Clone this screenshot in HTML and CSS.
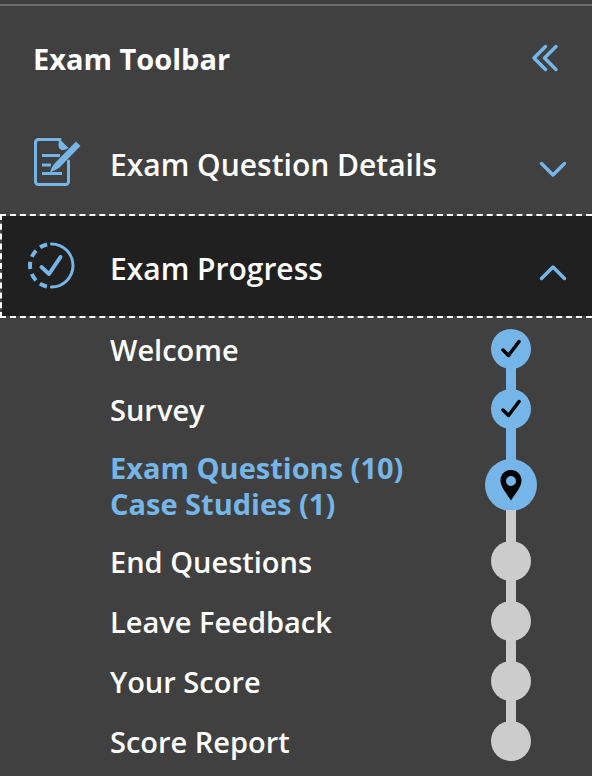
FILE: index.html
```html
<!DOCTYPE html>
<html lang="en">
<head>
<meta charset="utf-8">
<meta name="viewport" content="width=device-width, initial-scale=1">
<title>Exam Toolbar</title>
<link rel="stylesheet" href="styles.css">
</head>
<body>
<aside class="toolbar">
  <header class="toolbar-header">
    <h1 class="toolbar-title">Exam Toolbar</h1>
    <button class="collapse" type="button" aria-label="Collapse toolbar">
      <svg class="icon chevron" width="28" height="28" viewBox="0 0 28 28"><path d="M14.500 2.500L3 14L14.500 25.500M25 2.500L13.500 14L25 25.500"/></svg>
    </button>
  </header>

  <button class="section" type="button" aria-expanded="false">
    <svg class="icon section-icon" width="56" height="56" viewBox="0 0 56 56">
      <path d="M35 5.500H13.500a3 3 0 0 0-3 3V47.500a3 3 0 0 0 3 3H40.500a3 3 0 0 0 3-3V27"/>
      <path class="solid" d="M34 4.500L43.500 14Q41 16.500 37 16Q33.500 15.500 33.500 11Z"/>
      <path class="ruled" d="M17 21.500H35M17 31H26M17 39.500H37"/>
      <path class="solid" d="M51 7.500L55.500 12L34.500 33.500Q31 36 25 38.500Q27 32 30 29Z"/>
    </svg>
    <span class="section-label">Exam Question Details</span>
    <svg class="icon chevron" width="28" height="32" viewBox="0 0 28 32"><path d="M2.500 17.500L14 29L25.500 17.500"/></svg>
  </button>

  <button class="section open" type="button" aria-expanded="true" aria-controls="steps">
    <svg class="icon section-icon" width="56" height="56" viewBox="0 0 56 56">
      <path d="M26.500 6A21.500 21.500 0 0 1 26.500 49"/>
      <path class="arc" d="M26.500 6A21.500 21.500 0 0 0 26.500 49" stroke-dasharray="0 4.500 7.500 5.100 7.500 5.100 7.500 5.100 7.500 5.100 7.500 9"/>
      <path class="tick" d="M16.500 29L24 36L35.500 19"/>
    </svg>
    <span class="section-label">Exam Progress</span>
    <svg class="icon chevron" width="28" height="32" viewBox="0 0 28 32"><path d="M2.500 28.500L14 17L25.500 28.500"/></svg>
  </button>

  <ol class="steps" id="steps">
    <li class="step done">
      <span class="step-name">Welcome</span>
      <span class="track"><i class="line none"></i><i class="dot"><svg width="22" height="20" viewBox="0 0 22 20"><path d="M3 11L8.500 16.500L19 2.500"/></svg></i><i class="line"></i></span>
    </li>
    <li class="step done">
      <span class="step-name">Survey</span>
      <span class="track"><i class="line"></i><i class="dot"><svg width="22" height="20" viewBox="0 0 22 20"><path d="M3 11L8.500 16.500L19 2.500"/></svg></i><i class="line"></i></span>
    </li>
    <li class="step current" aria-current="step">
      <span class="step-name">Exam Questions (10)<br>Case Studies (1)</span>
      <span class="track"><i class="line"></i><i class="dot"><svg width="22" height="32" viewBox="0 0 22 32"><path class="pin" fill-rule="evenodd" d="M11 1C5 1 .5 5.500 .5 11.500C.5 18 7 25 11 31.500C15 25 21.500 18 21.500 11.500C21.500 5.500 17 1 11 1ZM11 7A5 5 0 0 1 11 17A5 5 0 0 1 11 7Z"/></svg></i><i class="line next"></i></span>
    </li>
    <li class="step">
      <span class="step-name">End Questions</span>
      <span class="track"><i class="line"></i><i class="dot"></i><i class="line"></i></span>
    </li>
    <li class="step">
      <span class="step-name">Leave Feedback</span>
      <span class="track"><i class="line"></i><i class="dot"></i><i class="line"></i></span>
    </li>
    <li class="step">
      <span class="step-name">Your Score</span>
      <span class="track"><i class="line"></i><i class="dot"></i><i class="line"></i></span>
    </li>
    <li class="step">
      <span class="step-name">Score Report</span>
      <span class="track"><i class="line"></i><i class="dot"></i><i class="line none"></i></span>
    </li>
  </ol>
</aside>
</body>
</html>
```
FILE: styles.css
```css
* {
  box-sizing: border-box;
}

body {
  margin: 0;
  padding-top: 4px;
  background: #404040;
  color: #fff;
  font-family: "Open Sans", "Noto Sans", sans-serif;
}

button {
  border: 0;
  background: none;
  color: inherit;
  font: inherit;
  cursor: pointer;
}

.toolbar {
  border-top: 2px solid #6b6b6b;
}

.toolbar-header {
  display: flex;
  align-items: center;
  justify-content: space-between;
  height: 104px;
  padding: 0 33px;
}

.toolbar-title {
  margin: 0;
  font-size: 29px;
  font-weight: 700;
}

.collapse {
  display: flex;
  padding: 0;
}

.icon {
  flex: none;
  fill: none;
  stroke: #75b5e7;
  stroke-width: 3;
  stroke-linecap: round;
  stroke-linejoin: round;
}

.icon.chevron {
  stroke-width: 3.5;
}

.icon .solid {
  fill: #75b5e7;
  stroke: none;
}

.icon .ruled {
  stroke-linecap: butt;
}

.icon .arc {
  stroke-width: 4;
  stroke-linecap: butt;
}

.icon .tick {
  stroke-width: 4;
}

.section {
  display: flex;
  align-items: center;
  width: 100%;
  height: 104px;
  padding: 0 25px 0 23px;
  border: 2px dashed transparent;
  border-right: 0;
  text-align: left;
}

.section.open {
  border-color: #fff;
  background: #202020;
  background-clip: padding-box;
}

.section-icon {
  margin-right: 29px;
}

.section-label {
  flex: 1;
  padding-top: 4px;
  font-size: 30px;
  font-weight: 600;
}

.steps {
  margin: 0;
  padding: 1px 55px 0 110px;
  list-style: none;
  font-size: 29px;
  font-weight: 600;
  line-height: 36px;
}

.step {
  display: flex;
  align-items: center;
  justify-content: space-between;
  height: 60px;
}

.step.current {
  height: 92px;
  color: #75b5e7;
  font-weight: 700;
}

.step-name {
  padding-top: 2px;
}

.track {
  display: flex;
  flex-direction: column;
  align-items: center;
  align-self: stretch;
  width: 52px;
}

.line {
  flex: 1;
  width: 10px;
  background: #ccc;
}

.dot {
  display: flex;
  align-items: center;
  justify-content: center;
  width: 40px;
  height: 40px;
  margin: -1px 0;
  border-radius: 50%;
  background: #ccc;
}

.done .line,
.done .dot,
.current .line,
.current .dot {
  background: #75b5e7;
}

.current .dot {
  width: 52px;
  height: 52px;
}

.current .line.next {
  background: #ccc;
}

.line.none {
  visibility: hidden;
}

.dot svg {
  fill: none;
  stroke: #000;
  stroke-width: 3.5;
  stroke-linecap: round;
  stroke-linejoin: round;
}

.dot .pin {
  fill: #000;
  stroke: none;
}
```
